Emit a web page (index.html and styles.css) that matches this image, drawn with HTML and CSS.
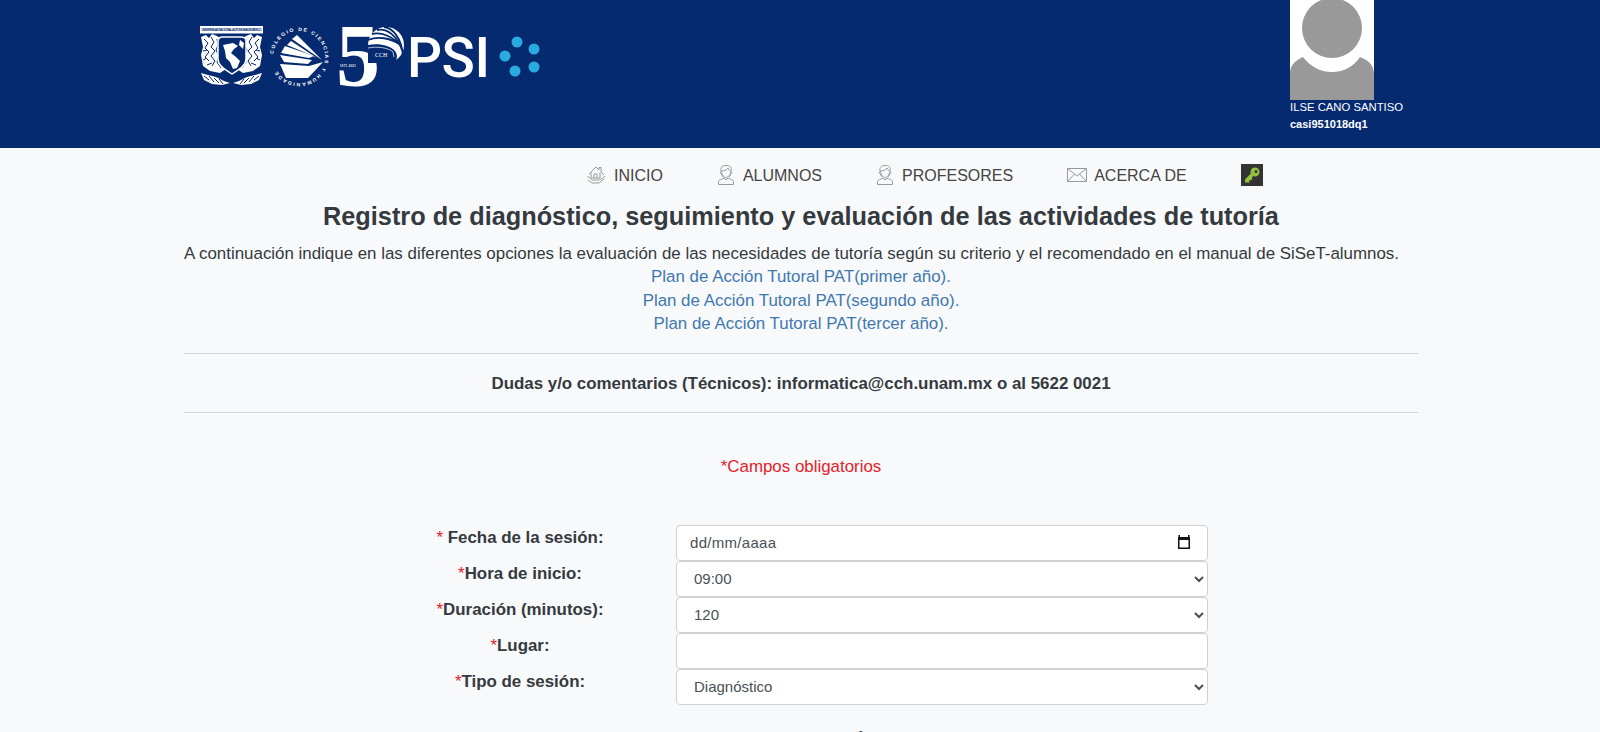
FILE: index.html
```html
<!DOCTYPE html>
<html lang="es">
<head>
  <meta charset="UTF-8">
  <meta name="viewport" content="width=device-width, initial-scale=1.0">
  <title>Registro de tutoría - PSI</title>
  <link rel="stylesheet" href="styles.css">
</head>
<body>
  <header class="topbar">
    <a class="logos" href="#" aria-label="UNAM, CCH, PSI">
      <svg class="logos-svg" viewBox="0 0 350 85" width="350" height="85">
        <defs>
          <!-- media aguila del escudo, se usa dos veces -->
          <g id="eagle">
            <path class="solid" d="M1 12L6 10L9 13L12 9L17 11L22 14L20 19L22 36L26 44L20 48L10 46L3 41L1 30L3 22Z"/>
            <path class="cut" d="M4 14L8 18L5 23L9 27L5 32L9 36M11 12L14 17L11 22L15 26L11 31L15 36L12 41M17 14L18 20L16 25L19 31L17 37L21 43M3 26L7 25M3 35L7 33M7 40L12 38"/>
            <path class="solid" d="M1 48L8 50L16 52L24 56L30 58L22 60L12 59L4 55Z"/>
            <path class="cut" d="M4 51L9 55M9 51L14 57M14 53L19 58M19 54L23 59"/>
          </g>
        </defs>
        <!-- escudo UNAM -->
        <g transform="translate(10 10)">
          <rect class="solid" x="0" y="1" width="63" height="7.500"/>
          <text class="crest-text" x="1.500" y="6" textLength="60">UNIVERSIDAD NACIONAL AUTONOMA DE MEXICO</text>
          <use href="#eagle"/>
          <use href="#eagle" transform="translate(63 0) scale(-1 1)"/>
          <path class="shield" d="M22 12H41C44 12 46 14 46 16V34C46 41 38 45 32 49C26 45 18 41 18 34V16C18 14 20 12 22 12Z"/>
          <path class="solid" d="M23 20L33 18L38 21L34 24L31 28L36 32L40 36L37 43L33 44L30 37L26 33L25 26Z"/>
          <path class="solid" d="M40 15L44 18L43 24L39 20Z"/>
        </g>
        <!-- circulo CCH -->
        <g transform="translate(109 42)">
          <path id="cch-ring" class="no-fill" d="M-25.800 -3A26 26 0 1 1 -23 12"/>
          <text class="ring-text"><textPath href="#cch-ring" textLength="150">COLEGIO DE CIENCIAS Y HUMANIDADES</textPath></text>
          <path class="solid" d="M-19 -2L-15 5L9 7L13 3Z"/>
          <path class="solid" d="M-14 -11L-18 -4L10 1L15 -1Z"/>
          <path class="solid" d="M-8 -16L-12 -12L12 -2L18 1Z"/>
          <path class="solid" d="M-2 -22L-7 -18L13 -4L23 3Z"/>
          <path class="solid" d="M-19 7L10 9L24 5L9 21H-13Z"/>
        </g>
        <!-- 50 anios -->
        <text class="five" x="146" y="70">5</text>
        <text class="years" x="150" y="52">1971-2021</text>
        <g transform="translate(196 30)">
          <circle class="solid" r="18"/>
          <path class="fan" d="M-18 -5C-8 -9 4 -7 13 -1M-14 -11C-5 -13 8 -9 16 3M-9 -15C0 -17 11 -11 17 8M-2 -18C6 -17 16 -8 17 12"/>
          <path class="cut-fill" d="M-18 0C-8 -2 4 0 9 6C12 10 11 14 9 18H-18Z"/>
          <path class="solid-line" d="M-18 3C-8 1 3 3 7 7L8 12"/>
          <text class="cch-mini" x="-11" y="12">CCH</text>
        </g>
        <!-- PSI -->
        <text class="psi" x="217" y="62">PSI</text>
        <circle class="dot" cx="327" cy="27" r="5.500"/>
        <circle class="dot" cx="344" cy="34" r="5.500"/>
        <circle class="dot" cx="315" cy="41" r="5.500"/>
        <circle class="dot" cx="344" cy="52" r="5.500"/>
        <circle class="dot" cx="325" cy="56" r="5.500"/>
      </svg>
    </a>
    <div class="user">
      <svg class="avatar" viewBox="0 0 84 100" width="84" height="100">
        <rect width="84" height="100" fill="#fff"/>
        <circle cx="42" cy="28" r="30" fill="#999"/>
        <path d="M0 100V73C0 65 6 60 13 57C20 66 30 72 42 72C54 72 64 66 70 57C78 60 84 65 84 74V100Z" fill="#999"/>
      </svg>
      <div class="user-name">ILSE CANO SANTISO</div>
      <div class="user-login">casi951018dq1</div>
    </div>
  </header>

  <nav class="menu">
    <a class="menu-item" href="#">
      <svg class="menu-icon" viewBox="0 0 20 20" width="20" height="20">
        <path d="M3 9L10 2L13 5V2.500H15V7L18 10M5 7.500V13H14V7.500M8 13V9H11V13"/>
        <path d="M1 12C3 11 4 14 6 15H12C14 15 16 14 19 11M2 15L6 18H13L18 14"/>
      </svg>
      INICIO
    </a>
    <a class="menu-item" href="#">
      <svg class="menu-icon" viewBox="0 0 18 20" width="18" height="20">
        <path d="M4 6C3 2 6 0.500 9 0.500C13 0.500 15 2.500 14 6C13.500 10 11 12.500 9 12.500C7 12.500 5 10 4 6Z"/>
        <path d="M4 6C7 6 10 5 11 3C12 5 13 6 14 6M6 12L3 7M12 12L15 7M1.500 19.500V16.500C1.500 15 5 14 7 13L9 15L11 13C13 14 16.500 15 16.500 16.500V19.500Z"/>
      </svg>
      ALUMNOS
    </a>
    <a class="menu-item" href="#">
      <svg class="menu-icon" viewBox="0 0 18 20" width="18" height="20">
        <path d="M4 6C3 2 6 0.500 9 0.500C13 0.500 15 2.500 14 6C13.500 10 11 12.500 9 12.500C7 12.500 5 10 4 6Z"/>
        <path d="M4 6C7 6 10 5 11 3C12 5 13 6 14 6M6 12L3 7M12 12L15 7M1.500 19.500V16.500C1.500 15 5 14 7 13L9 15L11 13C13 14 16.500 15 16.500 16.500V19.500Z"/>
      </svg>
      PROFESORES
    </a>
    <a class="menu-item menu-item-mail" href="#">
      <svg class="menu-icon" viewBox="0 0 20 14" width="20" height="14">
        <path d="M0.500 0.500H19.500V13.500H0.500ZM0.500 0.500L10 8L19.500 0.500M0.500 13.500L7.500 6M19.500 13.500L12.500 6"/>
      </svg>
      ACERCA DE
    </a>
    <a class="key" href="#" aria-label="Cambiar contraseña">
      <svg viewBox="0 0 22 22" width="22" height="22">
        <rect width="22" height="22" fill="#333"/>
        <path d="M14 3.500C11.500 3.500 9.500 5.500 9.500 8C9.500 8.600 9.600 9.100 9.800 9.600L4 15.500V18.500H8.500V16H11V13.500L12.300 12.100C12.900 12.400 13.400 12.500 14 12.500C16.500 12.500 18.500 10.500 18.500 8C18.500 5.500 16.500 3.500 14 3.500ZM15 6A1.500 1.500 0 1 1 15 9A1.500 1.500 0 0 1 15 6Z" fill="#93c23a" fill-rule="evenodd"/>
      </svg>
    </a>
  </nav>

  <main class="container">
    <h1 class="title">Registro de diagnóstico, seguimiento y evaluación de las actividades de tutoría</h1>
    <div class="intro">
      <p class="intro-text">A continuación indique en las diferentes opciones la evaluación de las necesidades de tutoría según su criterio y el recomendado en el manual de SiSeT-alumnos.</p>
      <a href="#">Plan de Acción Tutoral PAT(primer año).</a><br>
      <a href="#">Plan de Acción Tutoral PAT(segundo año).</a><br>
      <a href="#">Plan de Acción Tutoral PAT(tercer año).</a>
    </div>
    <hr class="rule">
    <p class="contact">Dudas y/o comentarios (Técnicos): informatica@cch.unam.mx o al 5622 0021</p>
    <hr class="rule">
    <p class="required-note">*Campos obligatorios</p>

    <form class="session-form">
      <label class="field-label" for="fecha"><span class="star">*</span> Fecha de la sesión:</label>
      <div class="date-field">
        <input class="date-text" type="text" id="fecha" name="fecha" value="dd/mm/aaaa">
        <svg class="date-icon" viewBox="0 0 14 14" width="14" height="14">
          <path d="M3 0V2H11V0H12.500V2H13V14H1V2H1.500V0ZM2.500 5V12.500H11.500V5Z" fill="#111" fill-rule="evenodd"/>
        </svg>
      </div>

      <label class="field-label" for="hora"><span class="star">*</span>Hora de inicio:</label>
      <select class="control" id="hora" name="hora">
        <option>09:00</option>
      </select>

      <label class="field-label" for="duracion"><span class="star">*</span>Duración (minutos):</label>
      <select class="control" id="duracion" name="duracion">
        <option>120</option>
      </select>

      <label class="field-label" for="lugar"><span class="star">*</span>Lugar:</label>
      <input class="control" type="text" id="lugar" name="lugar">

      <label class="field-label" for="tipo"><span class="star">*</span>Tipo de sesión:</label>
      <select class="control" id="tipo" name="tipo">
        <option>Diagnóstico</option>
      </select>
    </form>

    <h2 class="next-heading">DATOS DE SESIÓN</h2>
  </main>
</body>
</html>
```

FILE: styles.css
```css
body {
    font-family: "Liberation Sans", Arial, sans-serif;
    font-size: 16.9px;
    line-height: 23.4px;
    background: #f8f9fa;
    color: #343a40;
    margin: 0;
    padding: 0;
}
a {
    text-decoration: none;
}
.topbar {
    display: flex;
    justify-content: space-between;
    height: 148px;
    padding: 0 175px 0 190px;
    background: #052a70;
    color: #fff;
}
.logos {
    display: block;
    height: 85px;
    margin-top: 15px;
}
.logos-svg {
    display: block;
    overflow: visible;
}
.solid {
    fill: #fff;
}
.cut {
    fill: none;
    stroke: #052a70;
    stroke-width: 1;
}
.cut-fill {
    fill: #052a70;
}
.no-fill {
    fill: none;
}
.shield {
    fill: #052a70;
    stroke: #fff;
    stroke-width: 1.5;
}
.crest-text {
    font-size: 3.2px;
    font-weight: bold;
    fill: #052a70;
}
.ring-text {
    font-size: 5px;
    font-weight: bold;
    fill: #fff;
}
.five {
    font-family: "Liberation Serif", serif;
    font-size: 88px;
    font-weight: bold;
    fill: #fff;
}
.years {
    font-size: 2.6px;
    font-weight: bold;
    letter-spacing: 0.4px;
    fill: #fff;
}
.fan {
    fill: none;
    stroke: #052a70;
    stroke-width: 1.8;
}
.solid-line {
    fill: none;
    stroke: #fff;
    stroke-width: 0.7;
}
.cch-mini {
    font-family: "Liberation Serif", serif;
    font-size: 6px;
    fill: #fff;
}
.psi {
    font-family: Roboto, "Liberation Sans", sans-serif;
    font-size: 55px;
    font-weight: 500;
    letter-spacing: -0.5px;
    fill: #fff;
}
.dot {
    fill: #29abe2;
}
.user {
    width: 135px;
    font-size: 11.3px;
    line-height: 17px;
}
.avatar {
    display: block;
}
.user-name {
    margin-top: -1px;
    white-space: nowrap;
}
.user-login {
    font-size: 11px;
    font-weight: bold;
}
.menu {
    box-sizing: border-box;
    display: flex;
    align-items: center;
    gap: 54px;
    height: 54px;
    padding: 2px 0 0 586px;
    font-size: 16px;
}
.menu-item {
    display: flex;
    align-items: center;
    gap: 8px;
    color: #444;
}
.menu-item-mail {
    gap: 7px;
}
.menu-icon {
    margin-top: -2px;
    fill: none;
    stroke: #999;
    stroke-width: 1;
}
.key {
    display: block;
    height: 22px;
    margin-top: -2px;
}
.key svg {
    display: block;
}
.container {
    width: 1234px;
    margin-left: 184px;
    text-align: center;
}
.title {
    margin: 0;
    font-size: 25.3px;
    line-height: 29px;
    font-weight: bold;
}
.intro {
    margin: 11px 0 17px;
}
.intro-text {
    margin: 0;
    text-align: left;
}
.intro a {
    color: #3f78b0;
}
.rule {
    height: 1px;
    margin: 0;
    border: 0;
    background: #d0d2d4;
}
.contact {
    margin: 0;
    padding: 18px 0 17px;
    font-weight: bold;
}
.required-note {
    margin: 42px 0 0;
    color: #e62129;
}
.session-form {
    display: grid;
    grid-template-columns: 168px 532px;
    column-gap: 72px;
    grid-auto-rows: 36px;
    margin: 47px 0 0 252px;
}
.field-label {
    padding-top: 1px;
    font-weight: bold;
    white-space: nowrap;
}
.star {
    color: #e62129;
    font-weight: normal;
}
.control, .date-field {
    box-sizing: border-box;
    width: 100%;
    height: 36px;
    padding: 0 13px 2px;
    border: 1px solid #cfd1d3;
    border-radius: 4px;
    background: #fff;
    font-family: inherit;
    font-size: 15px;
    color: #495057;
}
.date-field {
    display: flex;
    align-items: center;
    justify-content: space-between;
    padding-right: 16px;
}
.date-text {
    width: 200px;
    padding: 0;
    border: 0;
    outline: none;
    background: transparent;
    font-family: inherit;
    font-size: 15px;
    letter-spacing: 0.3px;
    color: #495057;
}
.date-icon {
    display: block;
}
.next-heading {
    margin: 24px 0 0;
    font-size: 16.9px;
    line-height: 24px;
    font-weight: bold;
}
```
